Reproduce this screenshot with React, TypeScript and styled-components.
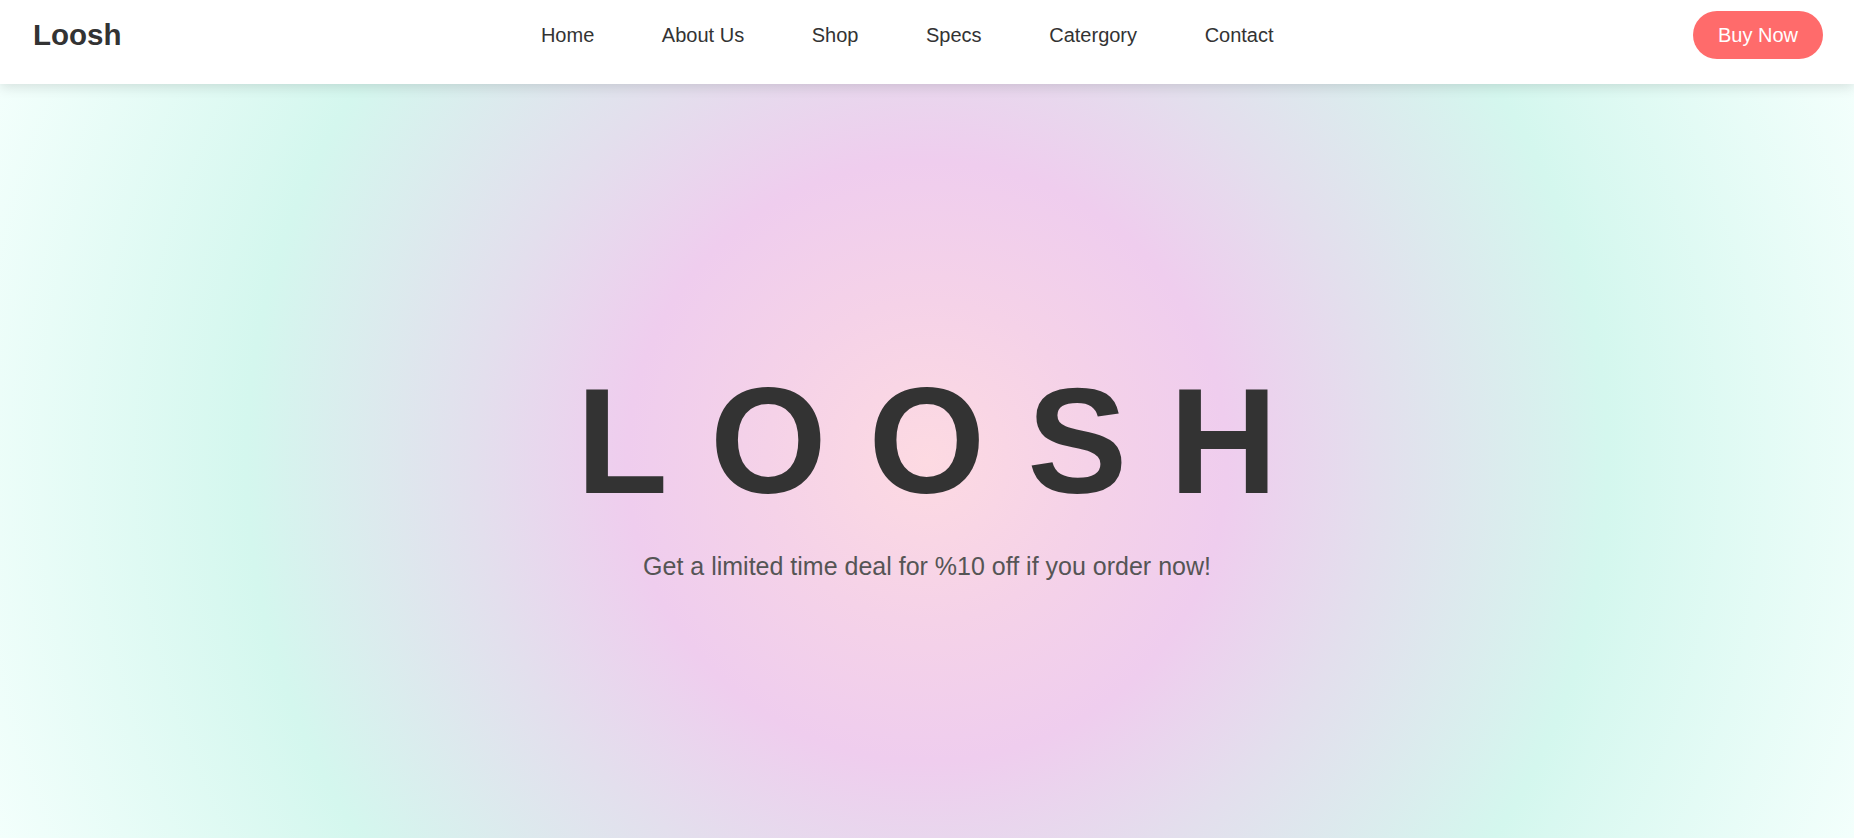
import React from "react";
import styled, { createGlobalStyle } from "styled-components";

const GlobalStyle = createGlobalStyle`
  * { box-sizing: border-box; }
  html, body { margin: 0; padding: 0; }
  body {
    font-family: "Liberation Sans", Arial, sans-serif;
    color: #333;
    background: #ffffff;
  }
`;

const Page = styled.div`
  display: flex;
  flex-direction: column;
  min-height: 100vh;
`;

const Header = styled.header`
  position: relative;
  z-index: 2;
  height: 84px;
  padding: 11px 31px 25px 33px;
  display: flex;
  align-items: center;
  justify-content: space-between;
  background: #ffffff;
  box-shadow: 0 3px 12px rgba(0, 0, 0, 0.12);
`;

const Logo = styled.div`
  font-size: 29.5px;
  font-weight: 700;
  color: #333;
`;

const Nav = styled.nav`
  display: flex;
  align-items: center;
  gap: 67.6px;
`;

const NavLink = styled.a`
  font-size: 20px;
  color: #333;
  text-decoration: none;
  cursor: pointer;
`;

const BuyButton = styled.button`
  height: 48px;
  padding: 0 25px;
  border: none;
  border-radius: 24px;
  background: #ff6b6b;
  color: #ffffff;
  font-family: "Liberation Sans", Arial, sans-serif;
  font-size: 20px;
  cursor: pointer;
`;

const Hero = styled.section`
  flex: 1;
  display: flex;
  flex-direction: column;
  align-items: center;
  justify-content: center;
  padding-top: 14px;
  background: radial-gradient(
    circle farthest-corner at 50% 50%,
    #fddae2 0%,
    #f5d2e8 16%,
    #efcdee 30%,
    #e3dfed 45%,
    #d4f7ee 68%,
    #f3fffc 100%
  );
`;

const Title = styled.h1`
  margin: 0;
  padding-left: 42px;
  font-size: 150px;
  font-weight: 700;
  letter-spacing: 42px;
  color: #333;
  line-height: normal;
`;

const Subtitle = styled.p`
  margin: 24.8px 0 0 0;
  font-size: 25px;
  color: #555;
  line-height: normal;
`;

const links = ["Home", "About Us", "Shop", "Specs", "Catergory", "Contact"];

export default function App() {
  return (
    <>
      <GlobalStyle />
      <Page>
        <Header>
          <Logo>Loosh</Logo>
          <Nav>
            {links.map((l) => (
              <NavLink key={l}>{l}</NavLink>
            ))}
          </Nav>
          <BuyButton>Buy Now</BuyButton>
        </Header>
        <Hero>
          <Title>LOOSH</Title>
          <Subtitle>Get a limited time deal for %10 off if you order now!</Subtitle>
        </Hero>
      </Page>
    </>
  );
}
